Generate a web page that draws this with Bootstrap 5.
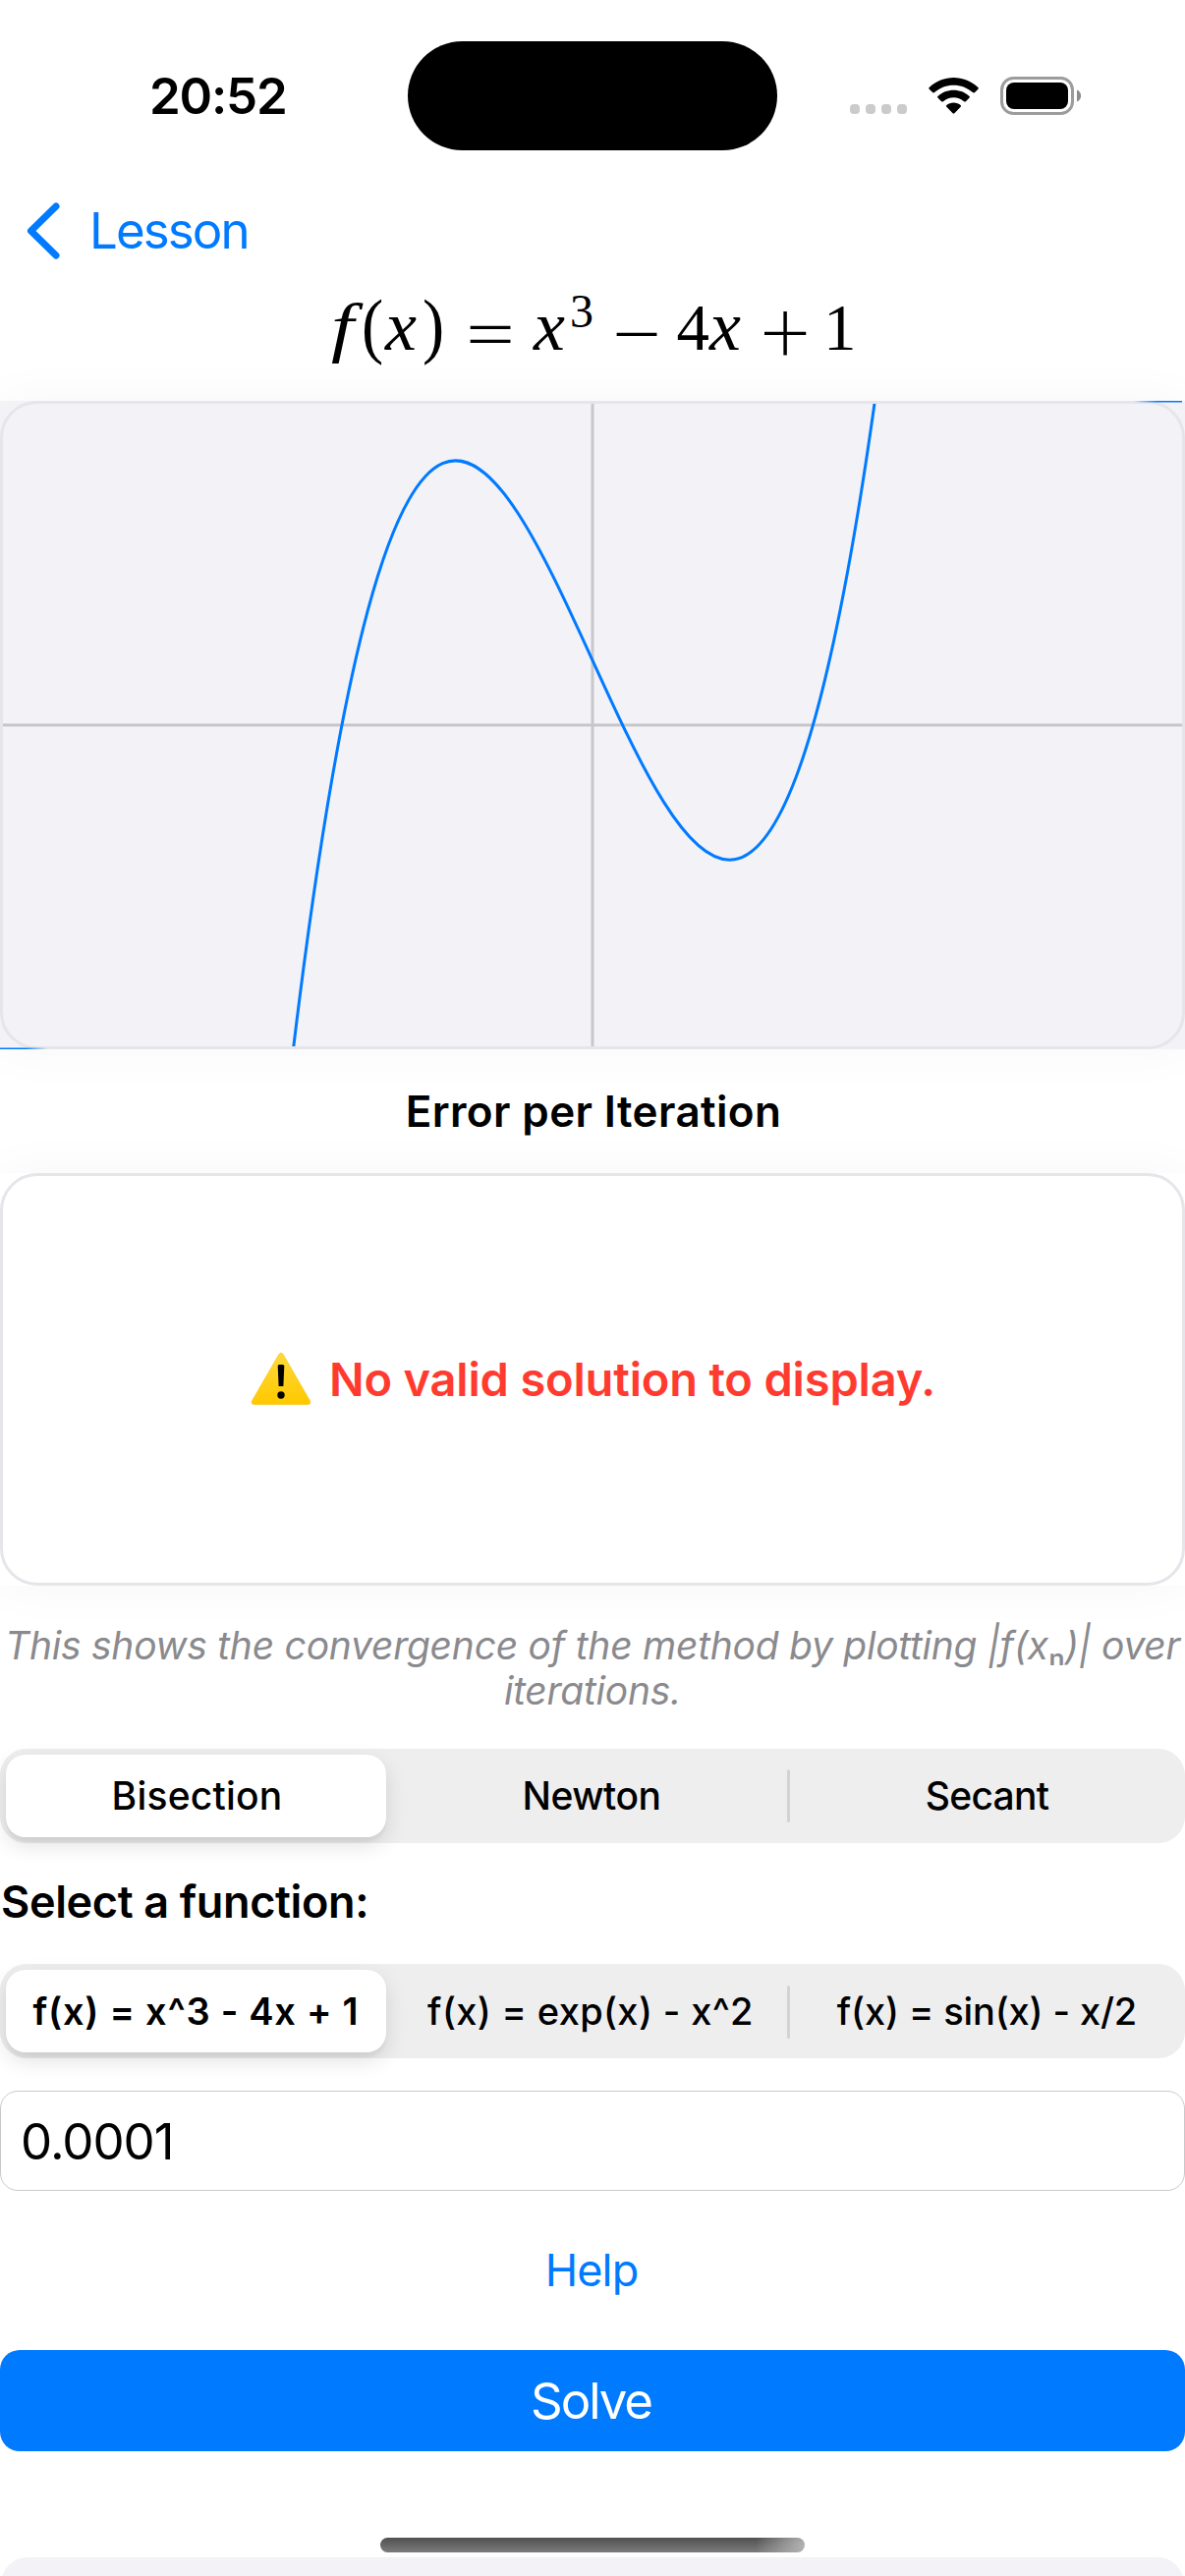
<!DOCTYPE html>
<html lang="en">
<head>
<meta charset="utf-8">
<meta name="viewport" content="width=device-width, initial-scale=1">
<title>Lesson</title>
<link href="https://cdn.jsdelivr.net/npm/bootstrap@5.3.0/dist/css/bootstrap.min.css" rel="stylesheet">
<style>
  :root { --ios-blue: #007aff; --ios-fill: #f2f2f7; --ios-line: #e5e5ea; }
  body { font-family: Inter, "Liberation Sans", sans-serif; color: #000; background: #fff; line-height: 1.2; }
  .screen { width: 1206px; height: 2622px; }
  .fs-body { font-size: 51px; }
  .status-bar { height: 176px; padding: 20px 106px 0 152px; }
  .clock { font-size: 51px; font-weight: 600; letter-spacing: -1.2px; width: 263px; }
  .island { width: 376px; height: 111px; border-radius: 56px; background: #000; margin-top: -2px; }
  .status-icons { width: 236px; height: 42px; }
  .nav-row { height: 118px; padding-left: 27px; color: var(--ios-blue); }
  .nav-row .fs-body { letter-spacing: -1.9px; margin-left: 28px; }
  .formula { height: 114px; overflow: visible; }
  .formula text { font-family: "Liberation Serif", serif; }
  .formula .op { font-family: Lato, sans-serif; font-weight: 300; }
  .plot { height: 660px; background: var(--ios-fill); box-shadow: 0 0 50px rgba(0,0,0,.04); }
  .section-title { height: 126px; padding-left: 2px; font-size: 44px; font-weight: 600; letter-spacing: .38px; }
  .error-card { height: 420px; box-shadow: 0 0 50px rgba(0,0,0,.04); background: #fff; }
  .error-frame { border: 3px solid var(--ios-line); border-radius: 38px; }
  .warn-text { color: #ff3b30; font-size: 47px; font-weight: 600; letter-spacing: -.18px; margin-left: 17px; }
  .caption-text { padding: 38px 0 36px; font-size: 39px; line-height: 46px; font-style: italic; color: #8a8a8e; letter-spacing: -.25px; }
  .segmented { height: 96px; padding: 6px 0 6px 6px; border-radius: 27px; background: #eeeeef; font-size: 39px; font-weight: 500; }
  .seg { flex: 0 0 396px; }
  .seg-on { flex: 0 0 387px; margin-right: 11px; border-radius: 20px; background: #fff; box-shadow: 0 8px 22px rgba(0,0,0,.12), 0 5px 3px rgba(0,0,0,.04); }
  .seg-last { flex: 1 1 auto; padding-left: 3px; }
  .seg-rule { width: 3px; height: 54px; margin-left: 1px; margin-right: -4px; background: #d3d3d5; border-radius: 2px; }
  .seg-fn { font-size: 38px; padding-top: 8px; padding-bottom: 6px; }
  .seg-fn .seg-on { margin-top: -2px; padding-top: 2px; }
  .field-title { height: 123px; padding: 0 0 3px 1px; font-size: 45px; font-weight: 600; letter-spacing: -.36px; }
  .tol-input.form-control { height: 102px; margin-top: 33px; padding: 0 20px; border: 1px solid #c9c9cb; border-radius: 18px; font-size: 51px; letter-spacing: -1px; color: #000; }
  .help-link { height: 162px; padding-right: 2px; font-size: 45px; letter-spacing: -.86px; color: var(--ios-blue); }
  .btn-solve { height: 103px; border-radius: 20px; background: var(--ios-blue); color: #fff; font-size: 51px; letter-spacing: -2.1px; padding: 2px 3px 0 0; border: 0; }
  .home-bar { width: 432px; height: 15px; margin-top: 88px; border-radius: 8px; background: radial-gradient(circle at 100% 60%, #b4b4b4, rgba(180,180,180,0) 50px), linear-gradient(#505050, #7c7c7c); }
  .next-card { height: 80px; margin: 5px 1px 0; border-radius: 27px; background: var(--ios-fill); }
  .ls-a { letter-spacing: .2px; padding-left: 2px } .ls-b { letter-spacing: -.51px } .ls-c { letter-spacing: -.72px }
  .ls-d { letter-spacing: .72px; font-weight: 600 } .ls-e { letter-spacing: .35px; padding-right: 2px } .ls-f { letter-spacing: -.13px }
</style>
</head>
<body>
<main class="screen d-flex flex-column overflow-hidden">
  <header class="status-bar d-flex align-items-center flex-shrink-0">
    <div class="clock">20:52</div>
    <div class="island"></div>
    <svg class="status-icons ms-auto" viewBox="864 77 236 42" aria-hidden="true">
      <g fill="#cbcbcb">
        <rect x="865" y="106" width="10" height="10" rx="4"/><rect x="881" y="106" width="10" height="10" rx="4"/>
        <rect x="897" y="106" width="10" height="10" rx="4"/><rect x="913" y="106" width="10" height="10" rx="4"/>
      </g>
      <path d="M945.4 89.2C960 75.600 981 75.600 995.700 89.200Q996 90 995.400 90.700L991.800 94.200Q991 94.700 990 94.100C979 84.200 962 84.200 951 94.100Q950.200 94.700 949.400 94.200L945.700 90.700Q945.100 90 945.400 89.200Z"/>
      <path d="M954.200 98.200C963 89.600 978 89.600 986.800 98.200Q987.200 98.900 986.600 99.600L982.600 103.400Q981.800 103.900 981 103.200C975 98 966 98 960 103.200Q959.200 103.900 958.400 103.400L954.400 99.600Q953.800 98.900 954.200 98.200Z"/>
      <path d="M963.200 107.200C967 103.700 974 103.700 977.800 107.200Q978.300 107.900 977.700 108.700L971.400 115.300Q970.500 116.200 969.600 115.300L963.300 108.700Q962.700 107.900 963.200 107.200Z"/>
      <rect x="1019.500" y="79.500" width="72" height="36" rx="12" fill="none" stroke="#9c9c9c" stroke-width="3"/>
      <rect x="1024" y="84" width="63" height="27" rx="8"/>
      <path d="M1096 91.500C1101.500 93.500 1101.500 101.500 1096 103.500Z" fill="#8c8c8c"/>
    </svg>
  </header>

  <nav class="nav-row d-flex align-items-center flex-shrink-0">
    <svg width="36" height="60" viewBox="0 0 36 60" fill="none" stroke="#007aff" stroke-width="7" stroke-linecap="round" stroke-linejoin="round" aria-hidden="true"><path d="M30 5L4.500 30L30 55"/></svg>
    <span class="fs-body">Lesson</span>
  </nav>

  <svg class="formula w-100 flex-shrink-0" viewBox="0 294 1206 114" role="img" aria-label="f(x) = x³ − 4x + 1">
    <text transform="translate(337 356) scale(1.22 1)" font-size="68" font-style="italic">f</text>
    <text transform="translate(368 356) scale(.9 1)" font-size="74">(</text>
    <text x="392" y="356" font-size="72" font-style="italic">x</text>
    <text transform="translate(430 356) scale(.9 1)" font-size="74">)</text>
    <text class="op" transform="translate(499 370) scale(1.12 1)" font-size="88" text-anchor="middle">=</text>
    <text x="543" y="356" font-size="72" font-style="italic">x</text>
    <text x="580" y="333" font-size="48">3</text>
    <text class="op" transform="translate(648 370) scale(1.12 1)" font-size="88" text-anchor="middle">−</text>
    <text x="688.500" y="356" font-size="67">4</text>
    <text x="722" y="356" font-size="72" font-style="italic">x</text>
    <text class="op" x="799" y="370" font-size="90" text-anchor="middle">+</text>
    <text x="838" y="356" font-size="67">1</text>
  </svg>

  <section class="plot flex-shrink-0">
    <svg class="d-block" width="1206" height="660" viewBox="0 0 1206 660" fill="none" aria-label="Graph of the function">
      <defs>
        <clipPath id="inner"><rect x="3" y="3" width="1200" height="654"/></clipPath>
        <linearGradient id="fadeL" gradientUnits="userSpaceOnUse" x1="1154" y1="0" x2="1178" y2="0"><stop stop-color="#007aff" stop-opacity="0"/><stop offset="1" stop-color="#007aff"/></linearGradient>
        <linearGradient id="fadeR" gradientUnits="userSpaceOnUse" x1="26" y1="0" x2="48" y2="0"><stop stop-color="#007aff"/><stop offset="1" stop-color="#007aff" stop-opacity="0"/></linearGradient>
      </defs>
      <rect x="1.500" y="1.500" width="1203" height="657" rx="36" stroke="#e5e5ea" stroke-width="3"/>
      <g clip-path="url(#inner)">
        <path d="M0 330H1206M603 0V660" stroke="#c7c7cc" stroke-width="3"/>
        <path d="M297.880 664.880C496.070 -983.990 694.250 1425.600 892.440 -14.780" stroke="#007aff" stroke-width="3"/>
      </g>
      <rect x="1152" y="0" width="51" height="1.500" fill="url(#fadeL)"/>
      <rect x="0" y="658.500" width="54" height="1.500" fill="url(#fadeR)"/>
    </svg>
  </section>

  <h2 class="section-title d-flex align-items-center justify-content-center m-0 flex-shrink-0">Error per Iteration</h2>

  <section class="error-card flex-shrink-0">
    <div class="error-frame h-100 d-flex align-items-center justify-content-center">
      <svg width="64" height="58" viewBox="0 0 64 58" aria-hidden="true">
        <defs><linearGradient id="warn" x1="0" y1="0" x2="0" y2="1"><stop stop-color="#ffd93b"/><stop offset="1" stop-color="#ffc800"/></linearGradient></defs>
        <path d="M29.600 4Q32 .2 34.400 4L61.300 50.500Q63 54.500 59 54.500H5Q1 54.500 2.700 50.500Z" fill="url(#warn)" stroke="#f5c000" stroke-width=".6"/>
        <path d="M28.700 15.500Q28.700 14 30.200 14H33.800Q35.300 14 35.300 15.500L34.400 36H29.600Z"/>
        <circle cx="32" cy="45" r="3.700"/>
      </svg>
      <span class="warn-text">No valid solution to display.</span>
    </div>
  </section>

  <p class="caption-text text-center text-nowrap m-0 flex-shrink-0">This shows the convergence of the method by plotting |f(x<span class="fst-normal">ₙ</span>)| over<br>iterations.</p>

  <div class="segmented d-flex align-items-stretch text-center flex-shrink-0">
    <div class="seg-on d-flex align-items-center justify-content-center ls-a">Bisection</div>
    <div class="seg d-flex align-items-center justify-content-center ls-b">Newton</div>
    <div class="seg-rule align-self-center"></div>
    <div class="seg-last d-flex align-items-center justify-content-center ls-c">Secant</div>
  </div>

  <h3 class="field-title d-flex align-items-center m-0 flex-shrink-0">Select a function:</h3>

  <div class="segmented seg-fn d-flex align-items-stretch text-center flex-shrink-0">
    <div class="seg-on d-flex align-items-center justify-content-center ls-d">f(x) = x^3 - 4x + 1</div>
    <div class="seg d-flex align-items-center justify-content-center ls-e">f(x) = exp(x) - x^2</div>
    <div class="seg-rule align-self-center"></div>
    <div class="seg-last d-flex align-items-center justify-content-center ls-f">f(x) = sin(x) - x/2</div>
  </div>

  <input class="tol-input form-control flex-shrink-0" type="text" value="0.0001" aria-label="Tolerance">
  <a class="help-link d-flex align-items-center justify-content-center text-decoration-none flex-shrink-0" href="#">Help</a>
  <button class="btn btn-solve w-100 flex-shrink-0" type="button">Solve</button>
  <div class="home-bar mx-auto flex-shrink-0"></div>
  <div class="next-card flex-shrink-0"></div>
</main>
<script src="https://cdn.jsdelivr.net/npm/bootstrap@5.3.0/dist/js/bootstrap.bundle.min.js"></script>
</body>
</html>
